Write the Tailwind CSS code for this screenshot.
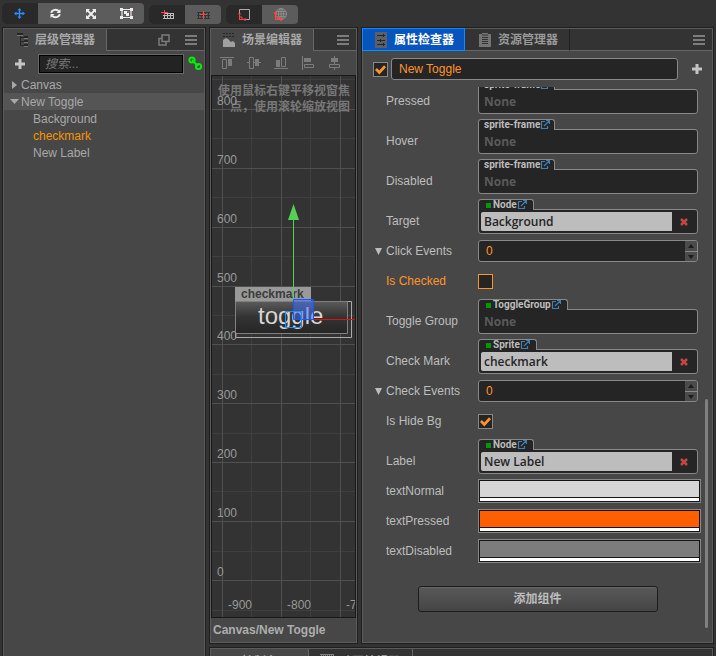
<!DOCTYPE html>
<html lang="zh-CN" class="h-full">
<head>
    <meta charset="UTF-8">
    <meta name="viewport" content="width=device-width, initial-scale=1.0">
    <title>New Toggle - 属性检查器</title>
    <script src="https://cdn.jsdelivr.net/npm/@tailwindcss/browser@4"></script>
</head>
<body class="h-screen overflow-hidden flex flex-col bg-[#333333] text-xs text-[#bdbdbd] font-['Liberation_Sans','Noto_Sans_CJK_SC',sans-serif]">
    <!-- shared icons -->
    <svg class="hidden">
        <symbol id="menu" viewBox="0 0 12 10"><path d="M0 1h12M0 5h12M0 9h12" stroke="#7c7c7c" stroke-width="2"/></symbol>
        <symbol id="plus" viewBox="0 0 10 10"><path d="M5 0v10M0 5h10" stroke="#c4c4c4" stroke-width="3"/></symbol>
        <symbol id="check" viewBox="0 0 12 12"><path d="M1 5.500l3.700 3.700L11 2.500" fill="none" stroke="#fd942b" stroke-width="3"/></symbol>
        <symbol id="cross" viewBox="0 0 8 8"><path d="M1 1l6 6M7 1l-6 6" stroke="#c14747" stroke-width="2.600"/></symbol>
        <symbol id="link" viewBox="0 0 10 10"><path d="M5 1.500H1.500v7h6V6M4 6l5-5M6 .5h3.500V4" fill="none" stroke="#3f7fb4" stroke-width="1.200"/></symbol>
        <symbol id="up" viewBox="0 0 12 10"><path d="M3 7l3-4 3 4z" fill="#1c1c1c"/></symbol>
        <symbol id="down" viewBox="0 0 12 10"><path d="M3 3l3 4 3-4z" fill="#1c1c1c"/></symbol>
    </svg>

    <header class="flex-none flex items-end gap-[5px] h-[27px] pl-0.5 pb-[3px]">
        <div class="flex w-[142px] h-[21px] rounded-sm overflow-hidden bg-[#5c5c5c]">
            <button class="flex-1 flex items-center justify-center bg-[#292929]" aria-label="移动">
                <svg class="w-[11px] h-[11px]" viewBox="0 0 11 11"><path d="M5.500 1v9M1 5.500h9" stroke="#2b8cff" stroke-width="1.400"/><path d="M5.500 0l2 2.500h-4zM5.500 11l2-2.500h-4zM0 5.500l2.500-2v4zM11 5.500l-2.500-2v4z" fill="#2b8cff"/></svg>
            </button>
            <button class="flex-1 flex items-center justify-center" aria-label="旋转">
                <svg class="w-[11px] h-[11px]" viewBox="0 0 11 11"><path d="M1.300 4.800a4.200 3.600 0 0 1 7.600-1.500M9.700 6.200a4.200 3.600 0 0 1-7.600 1.500" fill="none" stroke="#eee" stroke-width="1.900"/><path d="M10.500 1v4H6.500zM.5 10V6h4z" fill="#eee"/></svg>
            </button>
            <button class="flex-1 flex items-center justify-center" aria-label="缩放">
                <svg class="w-[10px] h-[10px]" viewBox="0 0 10 10"><path d="M1.500 1.500l7 7M8.500 1.500l-7 7" stroke="#eee" stroke-width="1.800"/><path d="M0 0h4L0 4zM10 0v4L6 0zM0 10V6l4 4zM10 10H6l4-4z" fill="#eee"/></svg>
            </button>
            <button class="flex-1 flex items-center justify-center" aria-label="矩形变换">
                <svg class="w-[13px] h-[11px]" viewBox="0 0 13 11"><path d="M2 1.500h9v8H2z" fill="none" stroke="#e6e6e6" stroke-width="1.200"/><path d="M0 0h3v3H0zM10 0h3v3h-3zM0 8h3v3H0zM10 8h3v3h-3zM4 3h3v3H4zM6 5h3v3H6z" fill="#eee"/><path d="M7 3.500h1.500V5" fill="none" stroke="#c86464"/></svg>
            </button>
        </div>
        <div class="flex w-[72px] h-[19px] rounded-sm overflow-hidden bg-[#5c5c5c]">
            <button class="flex-1 flex items-center justify-center bg-[#292929]" aria-label="锚点">
                <svg class="w-[13px] h-[10px]" viewBox="0 0 13 10"><path d="M3 3.500h10M2 5.500h11M2 8.500h11M3.500 3v6M6.500 3v6M9.500 3v6M12.500 3v6" stroke="#bbb"/><path d="M0 2.500h7M3.500 0v5" stroke="#ff4646"/></svg>
            </button>
            <button class="flex-1 flex items-center justify-center" aria-label="中心点">
                <svg class="w-[13px] h-[10px]" viewBox="0 0 13 10"><path d="M0 2.500h13M0 5.500h13M0 8.500h13M1.500 2v7M4.500 2v7M8.500 2v7M11.500 2v7" stroke="#333"/><path d="M3 4.500h7M6.500 1v8" stroke="#ff4646"/></svg>
            </button>
        </div>
        <div class="flex w-[72px] h-[19px] rounded-sm overflow-hidden bg-[#5c5c5c]">
            <button class="flex-1 flex items-center justify-center bg-[#292929]" aria-label="本地坐标系">
                <svg class="w-[13px] h-[13px]" viewBox="0 0 13 13"><path d="M1.500 1.500h10v10h-10z" fill="none" stroke="#aaa"/><path d="M1.500 5v6.500H8M0 6.500L1.500 5 3 6.500M6.500 10L8 11.500 6.500 13M1.500 9h2.500v2.500" fill="none" stroke="#ff4646"/></svg>
            </button>
            <button class="flex-1 flex items-center justify-center" aria-label="世界坐标系">
                <svg class="w-[13px] h-[13px]" viewBox="0 0 13 13"><g fill="none" stroke="#8c8c8c"><circle cx="7" cy="6" r="5.500"/><ellipse cx="7" cy="6" rx="2.500" ry="5.500"/><path d="M7 0v12M1.500 6h11M2.500 3.500h9M2.500 8.500h9"/></g><path d="M1.500 4v7.500H8M0 5.500L1.500 4 3 5.500M6.500 10L8 11.500 6.500 13M1.500 8.500h3v3" fill="none" stroke="#ff4646" stroke-width="1.200"/></svg>
            </button>
        </div>
    </header>

    <main class="flex-1 min-h-0 flex gap-[3px] px-0.5">
        <!-- 层级管理器 -->
        <section class="flex-none w-[204px] border border-b-0 border-[#1f1f1f]">
            <div class="h-full border border-b-0 border-[#5c5c5c] bg-[#474747]">
                <div class="flex h-[22px] bg-[#333333]">
                    <h2 class="flex-none flex items-center w-[103px] pl-[11px] gap-1.5 border-r border-[#666666] bg-[#474747] font-bold text-[#a8a8a8]">
                        <svg class="w-3.5 h-3.5" viewBox="0 0 14 14"><path d="M5.500 2v10.500H9M5.500 4.500H9M5.500 8.500H9" fill="none" stroke="#262626"/><path d="M2 0h6v2H2zM9 3h4v2H9zM9 7h4v2H9zM9 11h4v2H9z" fill="#262626"/><path d="M2 2.500h6M9 5.500h4M9 9.500h4M9 13.500h4" stroke="#777"/></svg>
                        层级管理器
                    </h2>
                    <div class="flex-1 flex items-center justify-end gap-[15px] pr-[7px] border-b border-[#666666]">
                        <svg class="w-3 h-3" viewBox="0 0 12 12"><path d="M4 1h7v6.500H4zM4 4.500H1V11h7V7.500" fill="none" stroke="#7c7c7c" stroke-width="1.500"/></svg>
                        <svg class="w-3 h-2.5"><use href="#menu"/></svg>
                    </div>
                </div>
                <div class="flex items-center h-[25px] pl-[11px] pr-px">
                    <button class="w-[23px]" aria-label="新建节点"><svg class="w-2.5 h-2.5"><use href="#plus"/></svg></button>
                    <input type="search" aria-label="搜索" placeholder="搜索..." class="flex-1 min-w-0 h-5 px-1.5 border border-[#666666] bg-[#232323] inset-ring inset-ring-black italic placeholder:text-[#777777]">
                    <button class="ml-1" aria-label="联动">
                        <svg class="w-[15px] h-[15px]" viewBox="0 0 15 15" fill="none" stroke="#00f000" stroke-width="2"><circle cx="4" cy="4" r="2.600"/><circle cx="10.500" cy="10.500" r="2.600"/><path d="M4 4l6 6"/></svg>
                    </button>
                </div>
                <ul class="leading-[18px] text-[#a8a8a8]">
                    <li class="flex items-center h-[17px] pl-[7px] gap-[3px]"><svg class="w-[7px] h-2" viewBox="0 0 7 8"><path d="M1 0l5 4-5 4z" fill="#a8a8a8"/></svg>Canvas</li>
                    <li class="flex items-center h-[17px] pl-1.5 gap-px bg-[#555555]"><svg class="w-2.5 h-[5px]" viewBox="0 0 10 5"><path d="M0 0h9L4.500 5z" fill="#a8a8a8"/></svg>New Toggle</li>
                    <li class="h-[17px] pl-[29px]">Background</li>
                    <li class="h-[17px] pl-[29px] text-[#f59300]">checkmark</li>
                    <li class="h-[17px] pl-[29px]">New Label</li>
                </ul>
            </div>
        </section>

        <div class="flex-1 min-w-0 flex flex-col gap-[3px]">
            <div class="flex-none flex gap-[3px]">
                <!-- 场景编辑器 -->
                <section class="flex-none w-[149px] border border-[#1f1f1f]">
                    <div class="h-full flex flex-col border border-[#5c5c5c] bg-[#474747]">
                        <div class="flex h-[22px] bg-[#333333]">
                            <h2 class="flex-none flex items-center w-[103px] pl-[11px] gap-1.5 border-r border-[#666666] bg-[#474747] font-bold text-[#a8a8a8]">
                                <svg class="w-3.5 h-3.5" viewBox="0 0 14 14"><path d="M1 .5h12M1 3.500h12" stroke="#262626" stroke-dasharray="2 1"/><path d="M1 14V7l3-2 2 1 3 3 2-1 2 2v4z" fill="#a0a0a0"/></svg>
                                场景编辑器
                            </h2>
                            <div class="flex-1 flex items-center justify-end pr-[7px] border-b border-[#666666]"><svg class="w-3 h-2.5"><use href="#menu"/></svg></div>
                        </div>
                        <div class="flex items-center gap-[13px] h-6 pl-[9px]">
                            <svg class="w-3.5 h-3.5" viewBox="0 0 14 14" fill="none" stroke="#7c7c7c"><path d="M0 1.500h14M2.500 3.500h4v9h-4z"/><path d="M8 3h4v7H8z" fill="#7c7c7c" stroke="none"/></svg>
                            <svg class="w-3.5 h-3.5" viewBox="0 0 14 14" fill="none" stroke="#7c7c7c"><path d="M0 6.500h2M6 6.500h2M12 6.500h2M2.500 1.500h4v11h-4z"/><path d="M8 3h4v7H8z" fill="#7c7c7c" stroke="none"/></svg>
                            <svg class="w-3.5 h-3.5" viewBox="0 0 14 14" fill="none" stroke="#7c7c7c"><path d="M0 12.500h14M7.500 1.500h4v9h-4z"/><path d="M2 4h4v7H2z" fill="#7c7c7c" stroke="none"/></svg>
                            <svg class="w-3.5 h-3.5" viewBox="0 0 14 14" fill="none" stroke="#7c7c7c"><path d="M1.500 0v14M3.500 8.500h9v3h-9z"/><path d="M3 2h7v4H3z" fill="#7c7c7c" stroke="none"/></svg>
                            <svg class="w-3.5 h-3.5" viewBox="0 0 14 14" fill="none" stroke="#7c7c7c"><path d="M6.500 0v2M6.500 6v2M6.500 12v2M1.500 8.500h10v3h-10z"/><path d="M3 2h7v4H3z" fill="#7c7c7c" stroke="none"/></svg>
                        </div>
                        <div class="border border-[#181818] bg-[#333333]">
                            <svg class="block w-full h-[541px]" font-size="12">
                                <defs>
                                    <linearGradient id="btn" x2="0" y2="1"><stop offset="0" stop-color="#5c5c5c"/><stop offset=".5" stop-color="#333"/><stop offset="1" stop-color="#262626"/></linearGradient>
                                </defs>
                                <path stroke="#3f3f3f" d="M39.500 0v541M98.500 0v541M0 3.500h999M0 62.500h999M0 121.500h999M0 180.500h999M0 239.500h999M0 298.500h999M0 357.500h999M0 415.500h999M0 475.500h999M0 534.500h999"/>
                                <path stroke="#505050" d="M10.500 0v541M69.500 0v541M128.500 0v541M0 33.500h999M0 92.500h999M0 151.500h999M0 210.500h999M0 268.500h999M0 327.500h999M0 386.500h999M0 445.500h999M0 504.500h999"/>
                                <g fill="#777777" font-weight="bold" text-anchor="end">
                                    <text x="138" y="19">使用鼠标右键平移视窗焦</text>
                                    <text x="138" y="35">点，使用滚轮缩放视图</text>
                                </g>
                                <path d="M23 225h113v32H23z" fill="url(#btn)"/>
                                <path d="M23.500 225.500h116v36h-116z" fill="none" stroke="#aaa"/>
                                <path d="M23.500 225.500h112v32h-112z" fill="none" stroke="#808080"/>
                                <g fill="#999999">
                                    <text x="5" y="29">800</text>
                                    <text x="5" y="88">700</text>
                                    <text x="5" y="147">600</text>
                                    <text x="5" y="206">500</text>
                                    <text x="5" y="264">400</text>
                                    <text x="5" y="323">300</text>
                                    <text x="5" y="382">200</text>
                                    <text x="5" y="441">100</text>
                                    <text x="5" y="500">0</text>
                                    <text x="16" y="533">-900</text>
                                    <text x="75" y="533">-800</text>
                                    <text x="134" y="533">-700</text>
                                </g>
                                <text x="46" y="248" font-size="24" fill="#d6d6d6">toggle</text>
                                <path d="M23 211h76v14H23z" fill="#999"/>
                                <text x="29" y="222" fill="#3c3c3c" font-weight="bold">checkmark</text>
                                <path d="M81.500 143v80" stroke="#55d055"/>
                                <path d="M81.500 128l5.500 16H76z" fill="#55d055"/>
                                <path d="M101 243.500h999" stroke="#e01010"/>
                                <path d="M81.500 223.500h20v20h-20z" fill="#3c6eff" fill-opacity=".5" stroke="#1458ff"/>
                                <path d="M73.500 235.500h16v16h-16z" fill="none" stroke="#1c90ff"/>
                            </svg>
                        </div>
                        <p class="flex-1 flex items-center pl-0.5 font-bold text-[#adadad] whitespace-nowrap">Canvas/New Toggle</p>
                    </div>
                </section>

                <!-- 属性检查器 -->
                <section class="flex-1 min-w-0 border border-[#1f1f1f]">
                    <div class="border border-[#5c5c5c] bg-[#474747]">
                        <div class="flex h-[22px] bg-[#333333]">
                            <h2 class="-mt-px -ml-px flex-none flex items-center w-[103px] pl-[11px] gap-1.5 border border-[#0c8cff] bg-[#0754bd] font-bold text-white">
                                <svg class="w-3.5 h-4" viewBox="0 0 14 16"><path d="M1 0h12v16H1z" fill="#5c6065"/><path d="M3 3.500h6M11 3.500h-1M3 8.500h3M7 8.500h4M3 12.500h8M9.500 2v3M6.500 7v3M9.500 11v3" stroke="#22262b"/></svg>
                                属性检查器
                            </h2>
                            <h2 class="flex-none flex items-center w-[105px] pl-[13px] gap-1.5 border-r border-b border-b-[#666666] border-r-[#1f1f1f] font-bold text-[#999999]">
                                <svg class="w-3.5 h-3.5" viewBox="0 0 14 14"><path d="M1 1h3V0h6v1h3v13H1z" fill="#747474"/><path d="M4 4.500h6M4 6.500h6M4 8.500h6M4 10.500h6M4 2h6" stroke="#333"/></svg>
                                资源管理器
                            </h2>
                            <div class="flex-1 flex items-center justify-end pr-[7px] border-b border-[#666666]"><svg class="w-3 h-2.5"><use href="#menu"/></svg></div>
                        </div>

                        <div class="flex items-center h-9 pl-2.5 pr-2.5">
                            <label class="relative flex-none flex w-[15px] h-[15px]">
                                <input type="checkbox" checked aria-label="启用" class="w-full h-full appearance-none border border-[#888888] bg-[#252525]">
                                <svg class="absolute inset-0.5 w-[11px] h-[11px] pointer-events-none"><use href="#check"/></svg>
                            </label>
                            <input type="text" value="New Toggle" aria-label="名称" class="flex-1 min-w-0 h-[22px] mx-[3px] px-[7px] rounded-[3px] border border-[#888888] bg-[#252525] text-[#fd942b]">
                            <button class="ml-[11px]" aria-label="更多"><svg class="w-2.5 h-2.5"><use href="#plus"/></svg></button>
                        </div>

                        <div class="relative overflow-hidden pb-[30px]">
                            <div class="-mt-[11px] pl-[23px] pr-3.5">
                                <div class="flex h-10">
                                    <span class="w-[92px] pt-[17px] leading-4">Pressed</span>
                                    <div class="flex-1 pt-[3px]">
                                        <div class="relative z-10 flex items-center w-fit h-[11px] pl-[5px] pr-1 rounded-t-[3px] border border-b-0 border-[#888888] bg-[#252525] font-['Roboto'] text-[10px] font-bold leading-none">sprite-frame<svg class="w-2.5 h-2.5"><use href="#link"/></svg></div>
                                        <div class="-mt-px h-[25px] px-[5px] rounded-[3px] rounded-tl-none border border-[#888888] bg-[#252525] font-['Open_Sans'] font-bold leading-6 text-[#5a5a5a]">None</div>
                                    </div>
                                </div>
                                <div class="flex h-10">
                                    <span class="w-[92px] pt-[17px] leading-4">Hover</span>
                                    <div class="flex-1 pt-[3px]">
                                        <div class="relative z-10 flex items-center w-fit h-[11px] pl-[5px] pr-1 rounded-t-[3px] border border-b-0 border-[#888888] bg-[#252525] font-['Roboto'] text-[10px] font-bold leading-none">sprite-frame<svg class="w-2.5 h-2.5"><use href="#link"/></svg></div>
                                        <div class="-mt-px h-[25px] px-[5px] rounded-[3px] rounded-tl-none border border-[#888888] bg-[#252525] font-['Open_Sans'] font-bold leading-6 text-[#5a5a5a]">None</div>
                                    </div>
                                </div>
                                <div class="flex h-10">
                                    <span class="w-[92px] pt-[17px] leading-4">Disabled</span>
                                    <div class="flex-1 pt-[3px]">
                                        <div class="relative z-10 flex items-center w-fit h-[11px] pl-[5px] pr-1 rounded-t-[3px] border border-b-0 border-[#888888] bg-[#252525] font-['Roboto'] text-[10px] font-bold leading-none">sprite-frame<svg class="w-2.5 h-2.5"><use href="#link"/></svg></div>
                                        <div class="-mt-px h-[25px] px-[5px] rounded-[3px] rounded-tl-none border border-[#888888] bg-[#252525] font-['Open_Sans'] font-bold leading-6 text-[#5a5a5a]">None</div>
                                    </div>
                                </div>
                                <div class="flex h-10">
                                    <span class="w-[92px] pt-[17px] leading-4">Target</span>
                                    <div class="flex-1 pt-[3px]">
                                        <div class="relative z-10 flex items-center w-fit h-[11px] pl-[7px] pr-1.5 rounded-t-[3px] border border-b-0 border-[#888888] bg-[#252525] font-['Roboto'] text-[10px] font-bold leading-none"><i class="w-[5px] h-[5px] mr-0.5 bg-[#009a00]"></i>Node<svg class="w-2.5 h-2.5"><use href="#link"/></svg></div>
                                        <div class="-mt-px flex h-[25px] p-0.5 rounded-[3px] rounded-tl-none border border-[#888888] bg-[#252525]">
                                            <span class="flex-1 px-[3px] rounded-l-[2px] bg-[#bdbdbd] font-['Open_Sans'] font-semibold leading-5 text-[#252525]">Background</span>
                                            <button class="w-[23px] flex items-center justify-center" aria-label="清除"><svg class="w-2 h-2"><use href="#cross"/></svg></button>
                                        </div>
                                    </div>
                                </div>
                                <div class="flex items-center h-[30px] -ml-3">
                                    <svg class="w-2 h-[7px] mr-1" viewBox="0 0 8 7"><path d="M1 0h7L4.500 7z" fill="#bdbdbd"/></svg>
                                    <label for="click-events" class="w-[92px]">Click Events</label>
                                    <div class="flex-1 flex h-[22px] rounded-[3px] border border-[#888888] bg-[#252525] overflow-hidden">
                                        <input id="click-events" type="number" value="0" class="flex-1 min-w-0 px-[7px] appearance-none [appearance:textfield] text-[#fd942b]">
                                        <div class="w-3 flex flex-col gap-px bg-[#888888]">
                                            <button class="flex-1 bg-[#4b4b4b]" aria-label="增加"><svg class="block w-3 h-2.5"><use href="#up"/></svg></button>
                                            <button class="flex-1 bg-[#4b4b4b]" aria-label="减少"><svg class="block w-3 h-2.5"><use href="#down"/></svg></button>
                                        </div>
                                    </div>
                                </div>
                                <div class="flex items-center h-[30px]">
                                    <label for="is-checked" class="w-[92px] text-[#fd942b]">Is Checked</label>
                                    <input id="is-checked" type="checkbox" class="w-[15px] h-[15px] appearance-none border border-[#fd942b] bg-[#252525]">
                                </div>
                                <div class="flex h-10">
                                    <span class="w-[92px] pt-[17px] leading-4">Toggle Group</span>
                                    <div class="flex-1 pt-[3px]">
                                        <div class="relative z-10 flex items-center w-fit h-[11px] pl-[7px] pr-1.5 rounded-t-[3px] border border-b-0 border-[#888888] bg-[#252525] font-['Roboto'] text-[10px] font-bold leading-none"><i class="w-[5px] h-[5px] mr-0.5 bg-[#009a00]"></i>ToggleGroup<svg class="w-2.5 h-2.5"><use href="#link"/></svg></div>
                                        <div class="-mt-px h-[25px] px-[5px] rounded-[3px] rounded-tl-none border border-[#888888] bg-[#252525] font-['Open_Sans'] font-bold leading-6 text-[#5a5a5a]">None</div>
                                    </div>
                                </div>
                                <div class="flex h-10">
                                    <span class="w-[92px] pt-[17px] leading-4">Check Mark</span>
                                    <div class="flex-1 pt-[3px]">
                                        <div class="relative z-10 flex items-center w-fit h-[11px] pl-[7px] pr-1.5 rounded-t-[3px] border border-b-0 border-[#888888] bg-[#252525] font-['Roboto'] text-[10px] font-bold leading-none"><i class="w-[5px] h-[5px] mr-0.5 bg-[#009a00]"></i>Sprite<svg class="w-2.5 h-2.5"><use href="#link"/></svg></div>
                                        <div class="-mt-px flex h-[25px] p-0.5 rounded-[3px] rounded-tl-none border border-[#888888] bg-[#252525]">
                                            <span class="flex-1 px-[3px] rounded-l-[2px] bg-[#bdbdbd] font-['Open_Sans'] font-semibold leading-5 text-[#252525]">checkmark</span>
                                            <button class="w-[23px] flex items-center justify-center" aria-label="清除"><svg class="w-2 h-2"><use href="#cross"/></svg></button>
                                        </div>
                                    </div>
                                </div>
                                <div class="flex items-center h-[30px] -ml-3">
                                    <svg class="w-2 h-[7px] mr-1" viewBox="0 0 8 7"><path d="M1 0h7L4.500 7z" fill="#bdbdbd"/></svg>
                                    <label for="check-events" class="w-[92px]">Check Events</label>
                                    <div class="flex-1 flex h-[22px] rounded-[3px] border border-[#888888] bg-[#252525] overflow-hidden">
                                        <input id="check-events" type="number" value="0" class="flex-1 min-w-0 px-[7px] appearance-none [appearance:textfield] text-[#fd942b]">
                                        <div class="w-3 flex flex-col gap-px bg-[#888888]">
                                            <button class="flex-1 bg-[#4b4b4b]" aria-label="增加"><svg class="block w-3 h-2.5"><use href="#up"/></svg></button>
                                            <button class="flex-1 bg-[#4b4b4b]" aria-label="减少"><svg class="block w-3 h-2.5"><use href="#down"/></svg></button>
                                        </div>
                                    </div>
                                </div>
                                <div class="flex items-center h-[30px]">
                                    <label for="is-hide-bg" class="w-[92px]">Is Hide Bg</label>
                                    <div class="relative flex w-[15px] h-[15px]">
                                        <input id="is-hide-bg" type="checkbox" checked class="w-full h-full appearance-none border border-[#888888] bg-[#252525]">
                                        <svg class="absolute inset-0.5 w-[11px] h-[11px] pointer-events-none"><use href="#check"/></svg>
                                    </div>
                                </div>
                                <div class="flex h-10">
                                    <span class="w-[92px] pt-[17px] leading-4">Label</span>
                                    <div class="flex-1 pt-[3px]">
                                        <div class="relative z-10 flex items-center w-fit h-[11px] pl-[7px] pr-1.5 rounded-t-[3px] border border-b-0 border-[#888888] bg-[#252525] font-['Roboto'] text-[10px] font-bold leading-none"><i class="w-[5px] h-[5px] mr-0.5 bg-[#009a00]"></i>Node<svg class="w-2.5 h-2.5"><use href="#link"/></svg></div>
                                        <div class="-mt-px flex h-[25px] p-0.5 rounded-[3px] rounded-tl-none border border-[#888888] bg-[#252525]">
                                            <span class="flex-1 px-[3px] rounded-l-[2px] bg-[#bdbdbd] font-['Open_Sans'] font-semibold leading-5 text-[#252525]">New Label</span>
                                            <button class="w-[23px] flex items-center justify-center" aria-label="清除"><svg class="w-2 h-2"><use href="#cross"/></svg></button>
                                        </div>
                                    </div>
                                </div>
                                <!-- colour swatches, the white strip is the alpha -->
                                <div class="flex items-center h-[30px] -mr-[3px]">
                                    <span class="w-[92px]">textNormal</span>
                                    <button class="flex-1 h-6 flex flex-col gap-px p-px border border-[#888888] bg-[#151515]" aria-label="textNormal"><i class="w-full flex-1 bg-[#d6d6d6]"></i><i class="w-full h-[3px] bg-white"></i></button>
                                </div>
                                <div class="flex items-center h-[30px] -mr-[3px]">
                                    <span class="w-[92px]">textPressed</span>
                                    <button class="flex-1 h-6 flex flex-col gap-px p-px border border-[#888888] bg-[#151515]" aria-label="textPressed"><i class="w-full flex-1 bg-[#ff5f00]"></i><i class="w-full h-[3px] bg-white"></i></button>
                                </div>
                                <div class="flex items-center h-[30px] -mr-[3px]">
                                    <span class="w-[92px]">textDisabled</span>
                                    <button class="flex-1 h-6 flex flex-col gap-px p-px border border-[#888888] bg-[#151515]" aria-label="textDisabled"><i class="w-full flex-1 bg-[#7c7c7c]"></i><i class="w-full h-[3px] bg-white"></i></button>
                                </div>
                            </div>
                            <button class="block w-60 h-[26px] mt-5 mx-auto rounded-[3px] border border-[#1c1c1c] bg-linear-to-b from-[#595959] to-[#454545] inset-shadow-[0_1px_#666666] font-bold">添加组件</button>
                            <div class="absolute right-1 bottom-3.5 w-[3px] h-[229px] rounded-sm bg-[#808080]"></div>
                        </div>
                    </div>
                </section>
            </div>

            <!-- 控制台 / 动画编辑器 -->
            <section class="flex-1 min-h-0 overflow-hidden border border-b-0 border-[#1f1f1f]">
                <div class="border border-[#5c5c5c] bg-[#474747]">
                    <div class="flex h-[26px] bg-[#333333]">
                        <h2 class="flex-none flex items-center w-[98px] pl-[11px] gap-1.5 border-r border-[#666666] bg-[#474747] font-bold text-[#a8a8a8]">
                            <svg class="w-3.5 h-3.5" viewBox="0 0 14 14"><path d="M2 3h2M7 3h6M2 7h2M6 7h6M2 11h2M6 11h6" stroke="#999" stroke-width="2"/></svg>
                            控制台
                        </h2>
                        <h2 class="flex-none flex items-center w-[104px] pl-[11px] gap-1.5 border-r border-b border-[#666666] font-bold text-[#999999]">
                            <svg class="w-3.5 h-4" viewBox="0 0 14 16"><path d="M0 0h14v15H0z" fill="#808080"/><path d="M0 2h14" stroke="#333" stroke-width="2" stroke-dasharray="1 1"/></svg>
                            动画编辑器
                        </h2>
                        <div class="flex-1 flex items-center justify-end pr-[7px] border-b border-[#666666]"><svg class="w-3 h-2.5"><use href="#menu"/></svg></div>
                    </div>
                </div>
            </section>
        </div>
    </main>
</body>
</html>
